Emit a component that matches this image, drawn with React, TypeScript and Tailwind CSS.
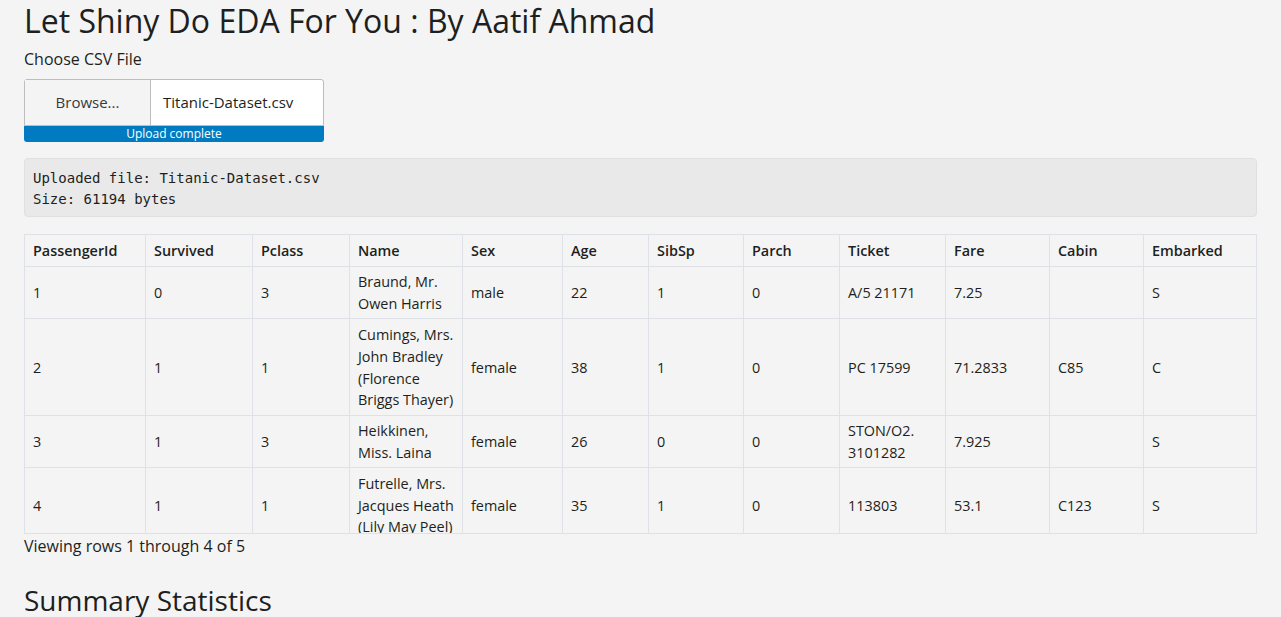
import React from 'react'

const columns = [
    { key: 'PassengerId', w: 121 },
    { key: 'Survived', w: 107 },
    { key: 'Pclass', w: 97 },
    { key: 'Name', w: 113 },
    { key: 'Sex', w: 100 },
    { key: 'Age', w: 86 },
    { key: 'SibSp', w: 95 },
    { key: 'Parch', w: 96 },
    { key: 'Ticket', w: 106 },
    { key: 'Fare', w: 104 },
    { key: 'Cabin', w: 94 },
    { key: 'Embarked', w: 113 },
]

const rows: { h: string; cells: string[][] }[] = [
    { h: 'h-[52px]', cells: [['1'], ['0'], ['3'], ['Braund, Mr.', 'Owen Harris'], ['male'], ['22'], ['1'], ['0'], ['A/5 21171'], ['7.25'], [''], ['S']] },
    { h: 'h-[97px]', cells: [['2'], ['1'], ['1'], ['Cumings, Mrs.', 'John Bradley', '(Florence', 'Briggs Thayer)'], ['female'], ['38'], ['1'], ['0'], ['PC 17599'], ['71.2833'], ['C85'], ['C']] },
    { h: 'h-[52px]', cells: [['3'], ['1'], ['3'], ['Heikkinen,', 'Miss. Laina'], ['female'], ['26'], ['0'], ['0'], ['STON/O2.', '3101282'], ['7.925'], [''], ['S']] },
    { h: 'h-[75px]', cells: [['4'], ['1'], ['1'], ['Futrelle, Mrs.', 'Jacques Heath', '(Lily May Peel)'], ['female'], ['35'], ['1'], ['0'], ['113803'], ['53.1'], ['C123'], ['S']] },
]

const App: React.FC = () => {
    return (
        <div className="min-h-screen bg-[#f4f4f4] text-[#1d1f21] px-6 font-['Open_Sans',sans-serif]">
            <h1 className="text-[32px] leading-[38px] font-normal pt-[2px]">Let Shiny Do EDA For You : By Aatif Ahmad</h1>

            <div className="mt-[7px] text-[16px] leading-6">Choose CSV File</div>

            <div className="mt-[8px] w-[300px]">
                <div className="flex h-[47px] border border-[#bdbdbd] rounded-t-[3px] bg-white">
                    <div className="w-[126px] flex items-center justify-center bg-[#f4f4f4] border-r border-[#bdbdbd] text-[15px] text-[#373a3c]">
                        Browse...
                    </div>
                    <div className="flex-1 flex items-center pl-3 text-[15px]">Titanic-Dataset.csv</div>
                </div>
                <div className="h-[16px] bg-[#007bc2] rounded-b-[3px] text-white text-[12px] leading-[16px] text-center">
                    Upload complete
                </div>
            </div>

            <pre className="mt-[16px] bg-[#e9e9e9] border border-[#e0e0e0] rounded-[4px] px-2 pt-[9px] pb-[6px] text-[14px] leading-[21px] font-['DejaVu_Sans_Mono',monospace] text-[#1d1f21]">
                {'Uploaded file: Titanic-Dataset.csv\nSize: 61194 bytes'}
            </pre>

            <div className="mt-[17px] h-[300px] overflow-hidden border-b border-[#dee2e6]">
                <table className="table-fixed border-collapse w-full text-[14.4px] leading-[21.6px]">
                    <colgroup>
                        {columns.map((c) => (
                            <col key={c.key} style={{ width: c.w }} />
                        ))}
                    </colgroup>
                    <thead>
                        <tr className="h-[32px]">
                            {columns.map((c) => (
                                <th key={c.key} className="border border-[#dee2e6] px-2 pt-[1px] text-left font-semibold">
                                    {c.key}
                                </th>
                            ))}
                        </tr>
                    </thead>
                    <tbody>
                        {rows.map((r, i) => (
                            <tr key={i} className={r.h}>
                                {r.cells.map((cell, j) => (
                                    <td key={j} className="border border-[#dee2e6] px-2 pt-[1px] pb-0 align-middle">
                                        {cell.map((line, k) => (
                                            <div key={k} className="whitespace-nowrap">{line}</div>
                                        ))}
                                    </td>
                                ))}
                            </tr>
                        ))}
                    </tbody>
                </table>
            </div>

            <div className="text-[16px] leading-6">Viewing rows 1 through 4 of 5</div>

            <h3 className="mt-[25px] text-[28px] leading-[34px] font-normal">Summary Statistics</h3>
        </div>
    )
}

export default App
